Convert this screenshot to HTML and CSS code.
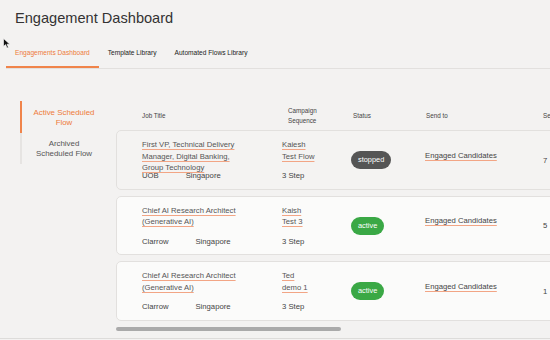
FILE: index.html
```html
<!DOCTYPE html>
<html lang="en">
<head>
  <meta charset="UTF-8">
  <title>Engagement Dashboard</title>
  <link rel="stylesheet" href="styles.css">
</head>
<body>
  <svg class="cursor" width="8" height="11" viewBox="0 0 8 11"><path d="M0.5 0.5 L0.5 8.5 L2.6 6.6 L4 10 L5.4 9.4 L4 6.2 L6.8 6.2 Z" fill="#111" stroke="#fff" stroke-width="0.6"/></svg>

  <h1 class="page-title">Engagement Dashboard</h1>

  <nav class="tabs">
    <a class="tab active">Engagements Dashboard</a>
    <a class="tab">Template Library</a>
    <a class="tab">Automated Flows Library</a>
  </nav>

  <div class="main">
    <ul class="side-nav">
      <li class="side-item active">Active Scheduled Flow</li>
      <li class="side-item">Archived Scheduled Flow</li>
    </ul>

    <div class="table-wrap">
      <div class="table">
        <div class="grid head">
          <div>Job Title</div>
          <div class="h-campaign">Campaign<br>Sequence</div>
          <div class="h-status">Status</div>
          <div class="h-send">Send to</div>
          <div>Se</div>
        </div>

        <div class="grid card">
          <div>
            <div class="name job"><span class="link">First VP, Technical Delivery Manager, Digital Banking, Group Technology</span></div>
            <div class="meta"><span class="company">UOB</span>Singapore</div>
          </div>
          <div>
            <div class="name flow"><span class="link">Kaiesh Test Flow</span></div>
            <div class="meta">3 Step</div>
          </div>
          <div class="mid"><span class="pill stopped">stopped</span></div>
          <div class="mid send"><span class="link">Engaged Candidates</span></div>
          <div class="mid">7</div>
        </div>

        <div class="grid card white">
          <div>
            <div class="name job"><span class="link">Chief AI Research Architect (Generative AI)</span></div>
            <div class="meta"><span class="company">Clarrow</span>Singapore</div>
          </div>
          <div>
            <div class="name flow"><span class="link">Kaish Test 3</span></div>
            <div class="meta">3 Step</div>
          </div>
          <div class="mid"><span class="pill active">active</span></div>
          <div class="mid send"><span class="link">Engaged Candidates</span></div>
          <div class="mid">5</div>
        </div>

        <div class="grid card white">
          <div>
            <div class="name job"><span class="link">Chief AI Research Architect (Generative AI)</span></div>
            <div class="meta"><span class="company">Clarrow</span>Singapore</div>
          </div>
          <div>
            <div class="name flow"><span class="link">Ted demo 1</span></div>
            <div class="meta">3 Step</div>
          </div>
          <div class="mid"><span class="pill active">active</span></div>
          <div class="mid send"><span class="link">Engaged Candidates</span></div>
          <div class="mid">1</div>
        </div>
      </div>
      <div class="scroll-thumb"></div>
    </div>
  </div>
  <div class="bottom-line"></div>
</body>
</html>
```

FILE: styles.css
```css
body {
  margin: 0;
  background-color: #f3f2f1;
  font-family: 'Liberation Sans', Arial, sans-serif;
  color: #444;
  height: 340px;
  overflow: hidden;
}

.cursor {
  position: absolute;
  left: 3px;
  top: 38px;
}

.page-title {
  margin: 0;
  padding: 9px 15px 0;
  font-size: 14.6px;
  line-height: 18px;
  font-weight: normal;
  color: #333;
}

.tabs {
  display: flex;
  margin: 6px 0 0 6px;
  border-bottom: 1px solid #e2e0de;
}

.tab {
  padding: 16px 9px 9px;
  font-size: 6.6px;
  line-height: 8px;
  color: #222;
  border-bottom: 2px solid transparent;
}

.tab.active {
  color: #ee7b3a;
  border-bottom-color: #f0844a;
}

.main {
  display: flex;
  padding-top: 32px;
}

.side-nav {
  list-style: none;
  margin: 0 0 0 20px;
  padding: 0;
  width: 86px;
  flex-shrink: 0;
}

.side-item {
  padding: 6px 10px 5px;
  font-size: 7.9px;
  line-height: 9.7px;
  text-align: center;
  color: #555;
  border-left: 2px solid #e6e4e2;
}

.side-item.active {
  color: #ee7b3a;
  border-left-color: #f0844a;
  padding-top: 7px;
  padding-bottom: 6px;
}

.table-wrap {
  margin-left: 10px;
  flex: 1;
  overflow: hidden;
}

.table {
  width: 700px;
}

.grid {
  display: grid;
  grid-template-columns: 140px 69px 74px 118px 1fr;
  padding-left: 25px;
}

.head {
  height: 29px;
  align-items: center;
  font-size: 6.3px;
  line-height: 10px;
  color: #444;
  padding-left: 26px;
}

.h-campaign {
  padding-left: 6px;
}

.h-status {
  padding-left: 2px;
}

.h-send {
  padding-left: 1px;
}

.card {
  border: 1px solid #e2e0de;
  border-radius: 5px;
  padding-top: 8px;
  padding-bottom: 7px;
  margin-bottom: 6px;
  font-size: 7.7px;
  line-height: 11.5px;
  background: #f4f3f2;
}

.card.white {
  background: #fbfbfa;
}

.name {
  height: 22px;
  margin-bottom: 9px;
  color: #555;
}

.name.job {
  width: 102px;
}

.name.flow {
  width: 33px;
}

.link {
  text-decoration: underline;
  text-decoration-color: #f2a585;
  text-decoration-thickness: 1px;
  text-underline-offset: 1.5px;
}

.meta {
  color: #444;
}

.company {
  display: inline-block;
  margin-right: 27px;
}

.mid {
  align-self: center;
}

.send {
  margin-bottom: 10px;
  color: #444;
}

.pill {
  display: inline-block;
  height: 18px;
  line-height: 18px;
  padding: 0 7px;
  border-radius: 9px;
  color: #fff;
  font-size: 7.4px;
}

.pill.stopped {
  background: #555;
}

.pill.active {
  background: #3aa845;
}

.scroll-thumb {
  width: 225px;
  height: 4px;
  border-radius: 2px;
  background: #aaa;
}

.bottom-line {
  margin-top: 7px;
  border-top: 1px solid #dddcda;
}
```
